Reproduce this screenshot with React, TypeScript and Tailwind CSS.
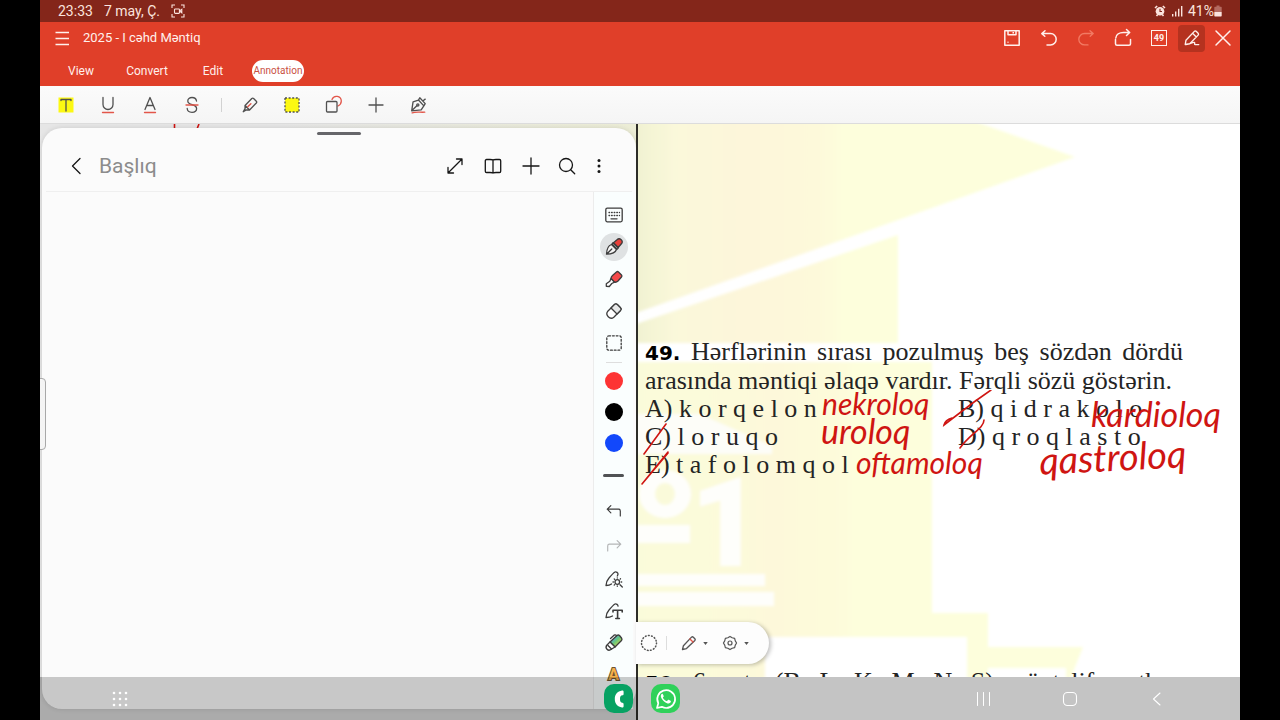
import type { ReactNode } from 'react';

type IconProps = { children: ReactNode; size?: string; width?: number };

function Icon({ children, size = 'size-5', width = 1.3 }: IconProps) {
  return (
    <svg
      viewBox="0 0 20 20"
      className={size}
      fill="none"
      stroke="currentColor"
      strokeWidth={width}
      strokeLinecap="round"
      strokeLinejoin="round"
      aria-hidden="true"
    >
      {children}
    </svg>
  );
}

type BtnProps = { label: string; className: string; children: ReactNode };

function Btn({ label, className, children }: BtnProps) {
  return (
    <button type="button" aria-label={label} className={`flex shrink-0 items-center justify-center ${className}`}>
      {children}
    </button>
  );
}

function StatusBar() {
  return (
    <div className="flex h-[22px] shrink-0 items-center justify-between bg-[#84261a] pr-[18px] pl-[18px] text-sm text-[#fbe3dd]">
      <div className="flex items-center">
        <span>23:33</span>
        <span className="ml-[11px]">7 may, Ç.</span>
        <svg viewBox="0 0 14 14" className="ml-[11px] size-3.5" fill="none" stroke="currentColor" strokeWidth="1.1">
          <path d="M1 4V1h3M10 1h3v3M13 10v3h-3M4 13H1v-3" />
          <rect x="3.5" y="5" width="5" height="4.4" rx="0.8" />
          <path d="M8.5 7l2.3-1.6v3.4z" />
        </svg>
      </div>
      <div className="flex items-center gap-[5px]">
        <svg viewBox="0 0 12 12" className="size-3" aria-hidden="true">
          <circle cx="6" cy="6.3" r="4.3" fill="currentColor" />
          <path d="M1 3L3.2 1M11 3L8.8 1M2.5 11l1.2-1.5M9.5 11L8.3 9.5" stroke="currentColor" strokeWidth="1.6" />
          <path d="M6 3.8v2.700h2" stroke="#84261a" strokeWidth="1.1" fill="none" />
        </svg>
        <svg viewBox="0 0 12 12" className="size-3" fill="currentColor" aria-hidden="true">
          <rect x="1" y="9" width="1.4" height="2.5" />
          <rect x="4" y="6.5" width="1.4" height="5" />
          <rect x="7" y="3.8" width="1.4" height="7.7" />
          <rect x="10" y="1" width="1.4" height="10.5" />
        </svg>
        <div className="flex items-center">
          <span>41%</span>
          <svg viewBox="0 0 8 12" className="h-3 w-2" aria-hidden="true">
            <path d="M2.5 0.5h3v1.2H7a.7.7 0 01.7.7V7H.3V2.4a.7.7 0 01.7-.7h1.5z" fill="#b46a60" />
            <path d="M.3 7h7.4v3.8a.7.7 0 01-.7.7H1a.7.7 0 01-.7-.7z" fill="currentColor" />
          </svg>
        </div>
      </div>
    </div>
  );
}

function AppHeader() {
  return (
    <header className="shrink-0 bg-[#e03f29] text-[#fff0ec]">
      <div className="flex h-8 items-center">
        <Btn label="Menu" className="ml-[11px] h-8 w-[22px]">
          <Icon width={1.4}>
            <path d="M3.5 4.5h13.5M3.5 10.5h13.5M3.5 16.5h13.5" strokeLinecap="butt" />
          </Icon>
        </Btn>
        <h1 className="pl-2.5 text-[13px] whitespace-nowrap">2025 - I cəhd Məntiq</h1>
        <div className="ml-auto flex items-center">
          <Btn label="Save" className="h-8 w-[37px]">
            <Icon width={1.5}>
              <path d="M2.8 2.8h14.4v14.4H2.8zM6 2.8v4h8v-4M10.5 4.8h1.5M5.5 14.2h1" strokeLinecap="butt" />
            </Icon>
          </Btn>
          <Btn label="Undo" className="h-8 w-[37px]">
            <Icon width={1.5}>
              <path d="M6 2.8L2.8 5.6l3 2.6M3 5.500h8.500a5.700 5.700 0 010 11.400H8" />
            </Icon>
          </Btn>
          <Btn label="Redo" className="h-8 w-[37px] text-[#f27a63]">
            <Icon>
              <path d="M14 2.8l3.2 2.8-3 2.6M17 5.500H8.500a5.700 5.700 0 000 11.400H12" />
            </Icon>
          </Btn>
          <Btn label="Share" className="h-8 w-[37px]">
            <Icon width={1.5}>
              <path d="M13.500 1.500l3.200 3-3.200 3M16.500 4.500h-6C6.500 4.500 3 6.500 2.800 10M2.500 11.500v4.200a1.500 1.500 0 001.500 1.500h12a1.500 1.500 0 001.500-1.500v-4.200" />
            </Icon>
          </Btn>
          <Btn label="Page 49" className="h-8 w-9">
            <span className="flex size-4 items-center justify-center border border-current text-[9px] leading-none font-bold">49</span>
          </Btn>
          <Btn label="Annotate" className="mr-px ml-px size-[27px] rounded bg-[#b5321f]">
            <Icon size="size-[18px]" width={1.5}>
              <path d="M2.500 17.200l.8-4.700L12.600 2.600a1.400 1.400 0 012 0l2.200 2.200a1.400 1.400 0 010 2L7.500 16.400zM10.600 4.800l4.200 4.200M2.500 17.200c5 .5 8-3 10-2.200 1.500.6-.5 2.300 1 2.300h4" />
            </Icon>
          </Btn>
          <Btn label="Close" className="h-8 w-[34px]">
            <Icon width={1.5}>
              <path d="M3 3l14 14M17 3L3 17" />
            </Icon>
          </Btn>
        </div>
      </div>
      <nav className="flex h-8 items-center pt-0.5 pl-2 text-xs">
        {['View', 'Convert', 'Edit'].map((tab) => (
          <button key={tab} type="button" className="w-[66px] text-center">
            {tab}
          </button>
        ))}
        <button type="button" className="ml-[6px] flex h-[22px] w-[52px] items-center justify-center rounded-full bg-white text-[10px] text-[#c9503f]">
          Annotation
        </button>
      </nav>
    </header>
  );
}

function AnnotationToolbar() {
  return (
    <div className="flex h-[38px] shrink-0 items-center border-b border-[#dcdcdc] bg-linear-to-b from-[#fbfbfb] to-[#f5f5f5] pl-[5px] text-[#505050]">
      <Btn label="Highlight text" className="h-9 w-[42px]">
        <Icon>
          <path d="M2.500 2.500h15v15h-15z" fill="#fcf812" stroke="none" />
          <path d="M5 5.500V4.500h10v1M10 4.500v11.500" />
        </Icon>
      </Btn>
      <Btn label="Underline" className="h-9 w-[42px]">
        <Icon>
          <path d="M5 2.500v7a5 5 0 0010 0v-7" />
          <path d="M4.500 17.500h11" stroke="#e2564a" />
        </Icon>
      </Btn>
      <Btn label="Squiggly" className="h-9 w-[42px]">
        <Icon>
          <path d="M5 14.500L10 2.500l5 12M6.800 10.500h6.400" />
          <path d="M4.500 17.500h11" stroke="#e2564a" />
        </Icon>
      </Btn>
      <Btn label="Strikethrough" className="h-9 w-[42px]">
        <Icon>
          <path d="M14.500 6c-.3-2.300-2-3.500-4.500-3.500S5.800 3.900 5.800 6c0 5 8.800 2.500 8.800 7.500 0 2.400-2 3.800-4.600 3.800s-4.600-1.300-4.800-3.800" />
          <path d="M4 10h12" stroke="#e2564a" />
        </Icon>
      </Btn>
      <span className="mr-[7px] ml-2 h-3.5 w-px bg-[#d2d2d2]" />
      <Btn label="Marker" className="h-9 w-[42px]">
        <Icon size="size-[18px]" width={1.5}>
          <path d="M4.500 10.500L12 2.800a1.500 1.500 0 012 0l3 3a1.500 1.500 0 010 2L9.500 15.500H5.800L2.500 17.500l2-3.500zM4.500 10.500l5 5" />
          <path d="M7.500 12l3.500-3.500" stroke="#e2564a" />
        </Icon>
      </Btn>
      <Btn label="Area highlight" className="h-9 w-[42px]">
        <Icon>
          <rect x="3" y="3" width="14" height="14" fill="#fcf812" strokeDasharray="2 1.600" strokeLinecap="butt" />
        </Icon>
      </Btn>
      <Btn label="Shapes" className="h-9 w-[42px]">
        <Icon>
          <path d="M8 4.500a4.800 4.800 0 019.300 1.500c0 2.500-1.300 4-3.300 5" stroke="#e2564a" />
          <rect x="2.500" y="6.500" width="10.500" height="10.500" rx="1" />
        </Icon>
      </Btn>
      <Btn label="Add" className="h-9 w-[42px]">
        <Icon>
          <path d="M10 3v14M3 10h14" />
        </Icon>
      </Btn>
      <Btn label="Signature" className="h-9 w-[42px]">
        <Icon size="size-[18px]" width={1.5}>
          <path d="M3 16.500L4.500 6.500l6-2 6 6.500-3 4.500L3 16.500l6-6M10.500 4.500L12 2l6 6.500-1.500 2.500M16 5l2-1.500" />
          <circle cx="9.800" cy="10" r="1.200" />
          <path d="M3.500 18.800c4-1.500 8-.5 14-.8" stroke="#e2564a" />
        </Icon>
      </Btn>
    </div>
  );
}

function NotePanel() {
  return (
    <section className="relative mt-1 mb-[11px] ml-0.5 flex min-w-0 flex-1 flex-col rounded-[20px] bg-[#fbfbfb] shadow-[0_0_5px_rgba(0,0,0,0.12)]">
      <span className="absolute top-1 left-1/2 h-[3px] w-11 -translate-x-1/2 rounded-full bg-[#66666a]" />
      <div className="mx-1 flex h-16 items-center border-b border-[#efefef] pt-[13px] pr-[18px] pl-[18px] text-[#161616]">
        <Btn label="Back" className="size-6">
          <Icon>
            <path d="M14 2.500L6.500 10l7.500 7.500" />
          </Icon>
        </Btn>
        <label htmlFor="note-title" className="sr-only">
          Title
        </label>
        <input
          id="note-title"
          type="text"
          placeholder="Başlıq"
          className="ml-[11px] h-9 min-w-0 flex-1 bg-transparent text-[21px] leading-9 outline-none placeholder:text-[#8c8c8c]"
        />
        <Btn label="Expand" className="size-[38px]">
          <Icon>
            <path d="M3 17L17 3M11.500 3H17v5.500M3 11.500V17h5.500" />
          </Icon>
        </Btn>
        <Btn label="Reading mode" className="size-[38px]">
          <Icon>
            <path d="M10 4c-.8-.5-1.700-.5-3-.5H3.500A1.200 1.200 0 002.300 4.700v10.600a1.200 1.200 0 001.200 1.200H7c1.300 0 2.200 0 3 .5.8-.5 1.700-.5 3-.5h3.500a1.200 1.200 0 001.200-1.200V4.700a1.200 1.200 0 00-1.200-1.200H13c-1.300 0-2.200 0-3 .5zM10 4v13" />
          </Icon>
        </Btn>
        <Btn label="Add page" className="size-[38px]">
          <Icon>
            <path d="M10 2v16M2 10h16" />
          </Icon>
        </Btn>
        <Btn label="Search" className="h-[38px] w-[34px]">
          <Icon>
            <circle cx="9" cy="9" r="6.500" />
            <path d="M13.700 13.700l4 4" />
          </Icon>
        </Btn>
        <Btn label="More" className="h-[38px] w-[30px]">
          <Icon>
            <g fill="currentColor" stroke="none">
              <circle cx="10" cy="4.500" r="1.500" />
              <circle cx="10" cy="10" r="1.500" />
              <circle cx="10" cy="15.500" r="1.500" />
            </g>
          </Icon>
        </Btn>
      </div>
      <div className="flex min-h-0 flex-1">
        <div className="flex-1" />
        <PenStrip />
      </div>
    </section>
  );
}

function PenStrip() {
  return (
    <div className="mr-[3px] flex w-10 flex-col items-center border-l border-[#ececec] bg-[#fafefe] pt-[7px] text-[#3c3c3c]">
      <Btn label="Keyboard" className="size-8">
        <Icon>
          <rect x="1.800" y="3.200" width="16.400" height="13.600" rx="1.500" />
          <path d="M5 7.500h10.500M5 10.500h10.500" strokeDasharray="0.600 2" />
          <path d="M7 13.800h6" />
        </Icon>
      </Btn>
      <Btn label="Pen" className="size-8">
        <span className="flex size-7 items-center justify-center rounded-full bg-[#dfe2e3]">
          <Icon>
            <path d="M9.500 5.800l3.500-3a2.700 2.700 0 014.200 4.200l-3 3.500z" fill="#e8403a" />
            <path d="M9 5.800L14.200 11M7.500 7.500l5 5c-1 3-4.500 4.500-10 4.700C2.700 12 4.500 8.500 7.500 7.500zM2.800 17l5-5M8 7l1-1.200L14.200 11l-1.200 1.200z" fill="#f4f4f4" />
          </Icon>
        </span>
      </Btn>
      <Btn label="Highlighter" className="size-8">
        <Icon>
          <path d="M7 9.500C7 8 7.500 7.500 8.500 6.500L12.500 3a1.500 1.500 0 012 0l3 3a1.500 1.500 0 010 2L14 12c-1 1-2 1.500-3.500 1.200z" fill="#f4494a" />
          <path d="M7 9.500L5.800 12.300l-3.500 2.500v2.500l3 .2L7.800 14.500l2.700-1.300z" fill="#fff" />
        </Icon>
      </Btn>
      <Btn label="Eraser" className="size-8">
        <Icon>
          <path d="M3.800 10.200L10.500 3.500a2 2 0 012.800 0l3.200 3.200a2 2 0 010 2.800L9.800 16.200c-3.800 3-9-2.200-6-6z" fill="#fff" />
          <path d="M7 7l6 6 3.500-3.500a2 2 0 000-2.800l-3.200-3.200a2 2 0 00-2.800 0z" fill="#e6e8e8" />
        </Icon>
      </Btn>
      <Btn label="Select" className="size-8">
        <Icon>
          <rect x="2.800" y="2.800" width="14.400" height="14.400" rx="2" strokeDasharray="1.800 1.900" />
        </Icon>
      </Btn>
      <span className="mt-[3px] mb-0.5 h-px w-4 bg-[#dedede]" />
      <Btn label="Red" className="h-[31px] w-8">
        <span className="size-[18px] rounded-full bg-[#fd3434]" />
      </Btn>
      <Btn label="Black" className="h-[31px] w-8">
        <span className="size-[18px] rounded-full bg-black" />
      </Btn>
      <Btn label="Blue" className="h-[31px] w-8">
        <span className="size-[18px] rounded-full bg-[#1248fb]" />
      </Btn>
      <Btn label="Line thickness" className="h-[35px] w-8">
        <span className="h-[3px] w-[21px] rounded-full bg-[#505254]" />
      </Btn>
      <Btn label="Undo stroke" className="h-[35px] w-8">
        <Icon size="size-[18px]">
          <path d="M6.500 4L2.500 8l4 4M2.500 8H15a2 2 0 012 2v5.500" />
        </Icon>
      </Btn>
      <Btn label="Redo stroke" className="h-[35px] w-8 text-[#b4b6b7]">
        <Icon size="size-[18px]">
          <path d="M13.500 4l4 4-4 4M17.500 8H5a2 2 0 00-2 2v5.500" />
        </Icon>
      </Btn>
      <Btn label="Shape assist" className="size-8">
        <Icon>
          <path d="M2 16.500c.2-4 .8-5 3-7.500 2-2.400 4-4.800 6-6 1.200-.6 3.200.8 3 2.200-.1.800-.3 1.200-.7 1.800M2 16.500c2.500 0 4-.3 5.500-1.500" />
          <circle cx="13.300" cy="13" r="2.300" />
          <path d="M13.300 8.800v.3M13.300 17v.3M9 13h.4M17.300 13h.4M10.200 9.900l.3.300M16 15.700l2.300 2.300M16.500 9.800l-.3.300M10.200 16.100l.3-.3" />
        </Icon>
      </Btn>
      <Btn label="Handwriting to text" className="size-8">
        <Icon>
          <path d="M2 16.500c.2-4 .8-5 3-7.500 2-2.400 4-4.800 6-6 1.200-.6 3.200.8 3 2.200M2 16.500c2.500 0 4.500-.3 6.500-1.500" />
          <path d="M9 11V9.200h9.200V11M13.600 9.200v8.300M11.800 17.500h3.600" strokeWidth="1.600" />
        </Icon>
      </Btn>
      <Btn label="Color pen" className="size-8">
        <Icon>
          <defs>
            <linearGradient id="rainbow" x1="0" y1="0" x2="1" y2="1">
              <stop offset="0.200" stopColor="#4ea3e6" />
              <stop offset="0.500" stopColor="#6cc878" />
              <stop offset="0.900" stopColor="#e9d64a" />
            </linearGradient>
          </defs>
          <path d="M6 9L13 2.500a2 2 0 012.500 0L17.500 5a2 2 0 010 2.500L11 14z" fill="url(#rainbow)" />
          <path d="M6 9l-3 3c-1.500 1.800-.8 3.500 0 4.300s2.500 1.500 4.300 0L11 14z" fill="#fff" />
          <path d="M4 12.500l3.500 3.500M6.500 5.500L9.500 2.800a2 2 0 013-.3" />
        </Icon>
      </Btn>
      <Btn label="Decorate text" className="size-8">
        <span className="text-base leading-none font-bold text-[#f5b04a] [-webkit-text-stroke:2px_#6d5433] [paint-order:stroke_fill]">A</span>
      </Btn>
    </div>
  );
}

function Watermark() {
  return (
    <svg
      viewBox="638 124 602 553"
      preserveAspectRatio="xMinYMin slice"
      className="absolute inset-0 size-full"
      aria-hidden="true"
    >
      <defs>
        <linearGradient id="paper" gradientUnits="userSpaceOnUse" x1="638" y1="0" x2="940" y2="0">
          <stop offset="0" stopColor="#f1f2d2" />
          <stop offset="0.120" stopColor="#faf8da" />
          <stop offset="0.350" stopColor="#fdf6da" />
          <stop offset="0.600" stopColor="#fdf9da" />
          <stop offset="0.680" stopColor="#fdfedc" />
          <stop offset="1" stopColor="#fdfedc" />
        </linearGradient>
        <linearGradient id="paper-low" gradientUnits="userSpaceOnUse" x1="638" y1="0" x2="940" y2="0">
          <stop offset="0" stopColor="#fafbda" />
          <stop offset="0.300" stopColor="#fcfada" />
          <stop offset="0.450" stopColor="#fdf8da" />
          <stop offset="0.650" stopColor="#fdfbda" />
          <stop offset="0.720" stopColor="#fdfedc" />
        </linearGradient>
        <filter id="soft">
          <feGaussianBlur stdDeviation="1.500" />
        </filter>
      </defs>
      <g filter="url(#soft)">
        <path d="M630 118H965L1075 157L898 220L630 315z" fill="url(#paper)" />
        <path d="M630 326L898 235V343H630z" fill="url(#paper)" />
        <path d="M630 362H932V613H988V647H1083L1066 690H630z" fill="url(#paper-low)" />
        <path d="M630 414H700L772 446V454H630z" fill="#fdfdf8" />
        <path d="M765 637H967V690H765z" fill="#ffffff" />
        <path d="M988 668H1066V680H988z" fill="#ffffff" />
        <g fill="#fefefb">
          <ellipse cx="665" cy="494" rx="26" ry="24" />
          <path d="M630 525h60v18h-60zM630 574h135v12H630zM630 592h144v14H630z" />
          <text x="690" y="566" fontFamily="Roboto, sans-serif" fontWeight="900" fontSize="124">
            1
          </text>
        </g>
        <ellipse cx="665" cy="494" rx="10" ry="11" fill="#fafada" />
      </g>
    </svg>
  );
}

function Document() {
  return (
    <main className="relative mb-[43px] min-w-0 overflow-hidden bg-white">
      <Watermark />
      <article className="relative mt-[214px] ml-[7px] w-[538px] font-['Liberation_Serif',serif] text-[26px] leading-7 whitespace-nowrap text-[#242424]">
        <p className="[text-align-last:justify]">
          <b className="font-['DejaVu_Sans',sans-serif] text-xl leading-7 text-black">49.</b> Hərflərinin sırası pozulmuş beş sözdən dördü
        </p>
        <p>arasında məntiqi əlaqə vardır. Fərqli sözü göstərin.</p>
        <ul className="grid grid-cols-[313px_1fr]">
          <li>A) k o r q e l o n</li>
          <li>B) q i d r a k o l o</li>
          <li>C) l o r u q o</li>
          <li>D) q r o q l a s t o</li>
          <li>E) t a f o l o m q o l</li>
        </ul>
        <p className="mt-[189px] [text-align-last:justify]">
          <b className="font-['DejaVu_Sans',sans-serif] text-xl leading-7 text-black">50.</b> 6 nota (B, L, K, M, N, S) müxtəlif mətbəx
        </p>
        <div className="font-[Lato,sans-serif] text-3xl leading-7 text-[#cf1512] italic">
          <span className="absolute top-[51px] left-[177px]">nekroloq</span>
          <span className="absolute top-[79px] left-[176px] text-[34px]">uroloq</span>
          <span className="absolute top-[110px] left-[211px]">oftamoloq</span>
          <span className="absolute top-[62px] left-[446px] text-[34px]">kardioloq</span>
          <span className="absolute top-[104px] left-[394px] -rotate-3 text-[38px]">qastroloq</span>
        </div>
        <svg
          viewBox="640 390 360 100"
          className="absolute top-[52px] -left-[5px] h-[100px] w-[360px]"
          fill="none"
          stroke="#cf1512"
          strokeWidth="1.600"
          strokeLinecap="round"
          aria-hidden="true"
        >
          <path d="M666 424L644 454M668 452L642 484M642 484L668 453M991 390L974 402L944 425Q945 420 952 418M984 420C984 428 970 434 960 448" />
        </svg>
      </article>
    </main>
  );
}

function FloatingTools() {
  return (
    <div className="absolute top-[498px] left-[596px] flex h-[42px] w-[133px] items-center rounded-r-full bg-[#fdfdfd] text-[#555] shadow-[2px_1px_4px_rgba(0,0,0,0.25)]">
      <Btn label="Lasso" className="ml-0.5 h-9 w-[22px]">
        <Icon width={1.5}>
          <circle cx="10" cy="10" r="7.500" strokeDasharray="0.800 2.340" />
        </Icon>
      </Btn>
      <span className="mr-2.5 ml-1.5 h-3.5 w-px bg-[#ddd]" />
      <Btn label="Pencil" className="h-9 w-6">
        <Icon size="size-[18px]" width={1.5}>
          <path d="M2.800 17.200l1-4.200 9-9.500a1.500 1.500 0 012 0l1.700 1.700a1.500 1.500 0 010 2l-9.300 9z" />
          <path d="M11 5.500l3.500 3.500" stroke="#e2564a" />
        </Icon>
      </Btn>
      <Btn label="Pencil options" className="h-9 w-2">
        <svg viewBox="0 0 6 4" className="h-[3px] w-[5px]" fill="currentColor" aria-hidden="true">
          <path d="M0 0h6L3 4z" />
        </svg>
      </Btn>
      <Btn label="Settings" className="ml-[9px] h-9 w-6">
        <Icon size="size-4" width={1.500}>
          <path d="M10 1.800l2.700 1.600 3.100.8.800 3.100L18.200 10l-1.600 2.700-.8 3.100-3.100.8L10 18.200l-2.700-1.600-3.100-.8-.8-3.100L1.800 10l1.600-2.700.8-3.100 3.100-.8z" />
          <circle cx="10" cy="10" r="2.500" />
        </Icon>
      </Btn>
      <Btn label="Settings options" className="h-9 w-2">
        <svg viewBox="0 0 6 4" className="h-[3px] w-[5px]" fill="currentColor" aria-hidden="true">
          <path d="M0 0h6L3 4z" />
        </svg>
      </Btn>
    </div>
  );
}

function SystemNav() {
  return (
    <nav className="absolute inset-x-0 bottom-0 grid h-[43px] grid-cols-[1fr_auto_1fr] items-center bg-black/20 text-white">
      <div className="flex pl-14">
        <Btn label="All apps" className="h-10 w-12">
          <svg viewBox="0 0 16 16" className="size-4" fill="currentColor" aria-hidden="true">
            {[2, 8, 14].map((y) => [2, 8, 14].map((x) => <circle key={`${x}-${y}`} cx={x} cy={y} r="1.300" />))}
          </svg>
        </Btn>
      </div>
      <div className="flex gap-[18px] pl-1">
        <Btn label="Phone" className="size-[29px] rounded-[10px] bg-[#07a263]">
          <svg viewBox="0 0 20 20" className="size-5" fill="#fff" aria-hidden="true">
            <path d="M13 1.500c.9-.2 1.600.3 1.600 1.200v2.200c0 .8-.4 1.200-1.200 1.300-1.600.2-2.400 1-2.400 3.800s.8 3.600 2.400 3.800c.8.100 1.200.5 1.200 1.300v2.200c0 .9-.7 1.400-1.600 1.200C8.500 17.500 5.800 15 5.800 10S8.500 2.500 13 1.500z" />
          </svg>
        </Btn>
        <Btn label="WhatsApp" className="size-[29px] rounded-[10px] bg-[#2fd15a]">
          <svg viewBox="0 0 24 24" className="size-6" fill="none" aria-hidden="true">
            <path d="M3 21l1.300-4.800A8.900 8.900 0 1112.200 21a9 9 0 01-4.300-1.200z" stroke="#fff" strokeWidth="1.700" strokeLinejoin="round" />
            <path d="M8.900 7.300c-.3-.6-.9-.6-1.300-.2-1.200 1.200-1 3 .3 4.900 1.500 2.200 3.400 3.800 5.700 4.400 1.700.5 3.200-.5 3.300-2.100 0-.3-.1-.4-.4-.6l-1.900-.9c-.3-.1-.5-.1-.7.200l-.8 1c-.2.200-.4.200-.7.100-1.500-.7-2.600-1.700-3.400-3.100-.1-.3-.1-.5.100-.7l.6-.8c.1-.2.1-.4 0-.6z" fill="#fff" />
          </svg>
        </Btn>
      </div>
      <div className="flex justify-end gap-[39px] pr-[59px]">
        <Btn label="Recent apps" className="h-10 w-12">
          <Icon width={1}>
            <path d="M4.500 3.500v13M10.500 3.500v13M16.500 3.500v13" />
          </Icon>
        </Btn>
        <Btn label="Home" className="h-10 w-12">
          <Icon width={1.100}>
            <rect x="3.500" y="3.500" width="13" height="13" rx="4" />
          </Icon>
        </Btn>
        <Btn label="Go back" className="h-10 w-12">
          <Icon width={1.100}>
            <path d="M13 4L6.500 10l6.500 6" />
          </Icon>
        </Btn>
      </div>
    </nav>
  );
}

export default function App() {
  return (
    <div className="h-screen bg-black px-10 font-[Roboto,sans-serif]">
      <div className="relative flex h-full flex-col overflow-hidden bg-[#f5f5f5]">
        <StatusBar />
        <AppHeader />
        <AnnotationToolbar />
        <div className="relative grid min-h-0 flex-1 grid-cols-[598fr_602fr]">
          <div className="relative flex min-w-0 overflow-hidden border-r-2 border-[#2d2d28] bg-linear-to-r from-[#e6e6e6] from-40% to-[#ecedd6]">
            <svg viewBox="0 0 40 5" className="absolute top-0 left-[130px] h-[5px] w-10" stroke="#cf1512" strokeWidth="1.600" aria-hidden="true">
              <path d="M4.500 0v5M29 0l-2 5" />
            </svg>
            <div className="absolute inset-x-0 bottom-0 h-[43px] bg-[#d6d6d6]" />
            <NotePanel />
          </div>
          <Document />
          <FloatingTools />
          <button
            type="button"
            aria-label="Edge panel"
            className="absolute top-[254px] -left-px h-[72px] w-[7px] rounded-r border border-[#a8a8a8] bg-[#f4f4f4]"
          />
        </div>
        <SystemNav />
      </div>
    </div>
  );
}
